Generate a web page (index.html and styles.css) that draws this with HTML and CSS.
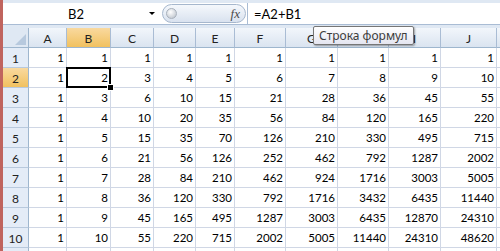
FILE: index.html
```html
<!DOCTYPE html>
<html lang="ru">
<head>
    <meta charset="UTF-8">
    <title>Треугольник Паскаля</title>
    <link rel="stylesheet" href="styles.css">
</head>
<body>
    <div class="window">
        <div class="edge"></div>
        <div class="main">
            <div class="strip"></div>
            <div class="fbar">
                <div class="namebox"><span class="name">B2</span><span class="drop"></span></div>
                <div class="fxbtn"><span class="knob"></span><i class="fx">fx</i></div>
                <div class="formula">=A2+B1</div>
            </div>
            <div class="strip"></div>
            <div class="sheet">
                <div class="corner"><span class="tri"></span></div>
                <div class="ch">A</div><div class="ch sel">B</div><div class="ch">C</div><div class="ch">D</div><div class="ch">E</div><div class="ch">F</div><div class="ch">G</div><div class="ch">H</div><div class="ch">I</div><div class="ch">J</div><div class="ch"></div>

                <div class="rh">1</div><div>1</div><div>1</div><div>1</div><div>1</div><div>1</div><div>1</div><div>1</div><div>1</div><div>1</div><div>1</div><div></div>
                <div class="rh sel">2</div><div>1</div><div class="cur">2</div><div>3</div><div>4</div><div>5</div><div>6</div><div>7</div><div>8</div><div>9</div><div>10</div><div></div>
                <div class="rh">3</div><div>1</div><div>3</div><div>6</div><div>10</div><div>15</div><div>21</div><div>28</div><div>36</div><div>45</div><div>55</div><div></div>
                <div class="rh">4</div><div>1</div><div>4</div><div>10</div><div>20</div><div>35</div><div>56</div><div>84</div><div>120</div><div>165</div><div>220</div><div></div>
                <div class="rh">5</div><div>1</div><div>5</div><div>15</div><div>35</div><div>70</div><div>126</div><div>210</div><div>330</div><div>495</div><div>715</div><div></div>
                <div class="rh">6</div><div>1</div><div>6</div><div>21</div><div>56</div><div>126</div><div>252</div><div>462</div><div>792</div><div>1287</div><div>2002</div><div></div>
                <div class="rh">7</div><div>1</div><div>7</div><div>28</div><div>84</div><div>210</div><div>462</div><div>924</div><div>1716</div><div>3003</div><div>5005</div><div></div>
                <div class="rh">8</div><div>1</div><div>8</div><div>36</div><div>120</div><div>330</div><div>792</div><div>1716</div><div>3432</div><div>6435</div><div>11440</div><div></div>
                <div class="rh">9</div><div>1</div><div>9</div><div>45</div><div>165</div><div>495</div><div>1287</div><div>3003</div><div>6435</div><div>12870</div><div>24310</div><div></div>
                <div class="rh">10</div><div>1</div><div>10</div><div>55</div><div>220</div><div>715</div><div>2002</div><div>5005</div><div>11440</div><div>24310</div><div>48620</div><div></div>
                <div class="rh"></div><div></div><div></div><div></div><div></div><div></div><div></div><div></div><div></div><div></div><div></div><div></div>
            </div>
        </div>
        <div class="tip">Строка формул</div>
    </div>
</body>
</html>
```

FILE: styles.css
```css
body {
    margin: 0;
    width: 500px;
    height: 251px;
    overflow: hidden;
    background-color: #fff;
    font-family: Lato, "Liberation Sans", sans-serif;
    color: #000;
}
.window {
    position: relative;
    display: flex;
    height: 251px;
}
.edge {
    flex: none;
    width: 3px;
    background-color: #c0645e;
}
.main {
    flex: 1;
    min-width: 0;
    overflow: hidden;
}
.strip {
    height: 3px;
    background-color: #dfe8f3;
}
.fbar {
    display: flex;
    align-items: center;
    height: 21px;
    background-color: #fff;
    border-bottom: 1px solid #a9bcd4;
}
.namebox {
    display: flex;
    align-items: center;
    width: 158px;
    height: 100%;
}
.name {
    flex: 1;
    text-align: center;
    font-size: 13px;
}
.drop {
    width: 0;
    height: 0;
    border-left: 3px solid transparent;
    border-right: 3px solid transparent;
    border-top: 3px solid #000;
    margin-right: 6px;
}
.fxbtn {
    display: flex;
    align-items: center;
    justify-content: space-between;
    box-sizing: border-box;
    width: 84px;
    height: 19px;
    margin-left: 1px;
    padding: 0 5px 0 3px;
    border: 1px solid #a6b7cd;
    border-radius: 10px;
    background: linear-gradient(#f5f8fc, #d9e2ef);
}
.knob {
    width: 9px;
    height: 9px;
    border-radius: 50%;
    border: 1px solid #a8b0bb;
    background: radial-gradient(circle at 40% 35%, #fff, #b5bcc6);
}
.fx {
    font-family: "Liberation Serif", serif;
    font-size: 13px;
    color: #4a4a4a;
}
.formula {
    flex: 1;
    display: flex;
    align-items: center;
    height: 100%;
    margin-left: 1px;
    padding-left: 6px;
    border-left: 1px solid #a9bcd4;
    font-size: 13px;
}
.sheet {
    display: grid;
    grid-template-columns: 26px 38px 44px 43px 42px 39px 51px 52px 51px 52px 56px 40px;
    grid-auto-rows: 20px;
}
.sheet > div {
    box-sizing: border-box;
    display: flex;
    align-items: flex-end;
    justify-content: flex-end;
    padding: 0 2px 3px 0;
    border-right: 1px solid #d0d7e5;
    border-bottom: 1px solid #d0d7e5;
    font-size: 11.5px;
    line-height: 13px;
}
.sheet > .corner {
    padding: 0 2px 2px 0;
    background-color: #dfe8f3;
    border-right-color: #9eb6ce;
    border-bottom-color: #9eb6ce;
}
.tri {
    width: 0;
    height: 0;
    border-left: 11px solid transparent;
    border-bottom: 11px solid #b7c9de;
}
.sheet > .ch {
    align-items: center;
    justify-content: center;
    padding: 1px 0 0 0;
    background: linear-gradient(#f2f6fb, #dae4f0);
    border-right-color: #a9bcd4;
    border-bottom-color: #9eb6ce;
    color: #222;
    font-size: 12px;
}
.sheet > .rh {
    align-items: center;
    justify-content: center;
    padding: 1px 0 0 0;
    background-color: #e4ecf7;
    border-right-color: #9eb6ce;
    border-bottom-color: #b8c9dd;
    color: #222;
    font-size: 12px;
}
.sheet > .sel {
    background: linear-gradient(#f9d99f, #f1c15f);
}
.sheet > .cur {
    position: relative;
    z-index: 1;
}
.cur::after {
    content: "";
    position: absolute;
    top: -1px;
    left: -1px;
    right: -1px;
    bottom: -1px;
    border: 2px solid #000;
}
.cur::before {
    content: "";
    position: absolute;
    right: -4px;
    bottom: -4px;
    width: 5px;
    height: 5px;
    background-color: #000;
    border: 1px solid #fff;
    z-index: 1;
}
.tip {
    position: absolute;
    left: 313px;
    top: 26px;
    z-index: 2;
    box-sizing: border-box;
    height: 19px;
    padding: 0 5px;
    border: 1px solid #767676;
    border-radius: 2px;
    background: linear-gradient(#fff, #e4e5f0);
    box-shadow: 1px 1px 2px rgba(0,0,0,0.35);
    font-family: "Noto Sans", sans-serif;
    font-size: 12px;
    line-height: 17px;
    color: #3c3c3c;
}
```
